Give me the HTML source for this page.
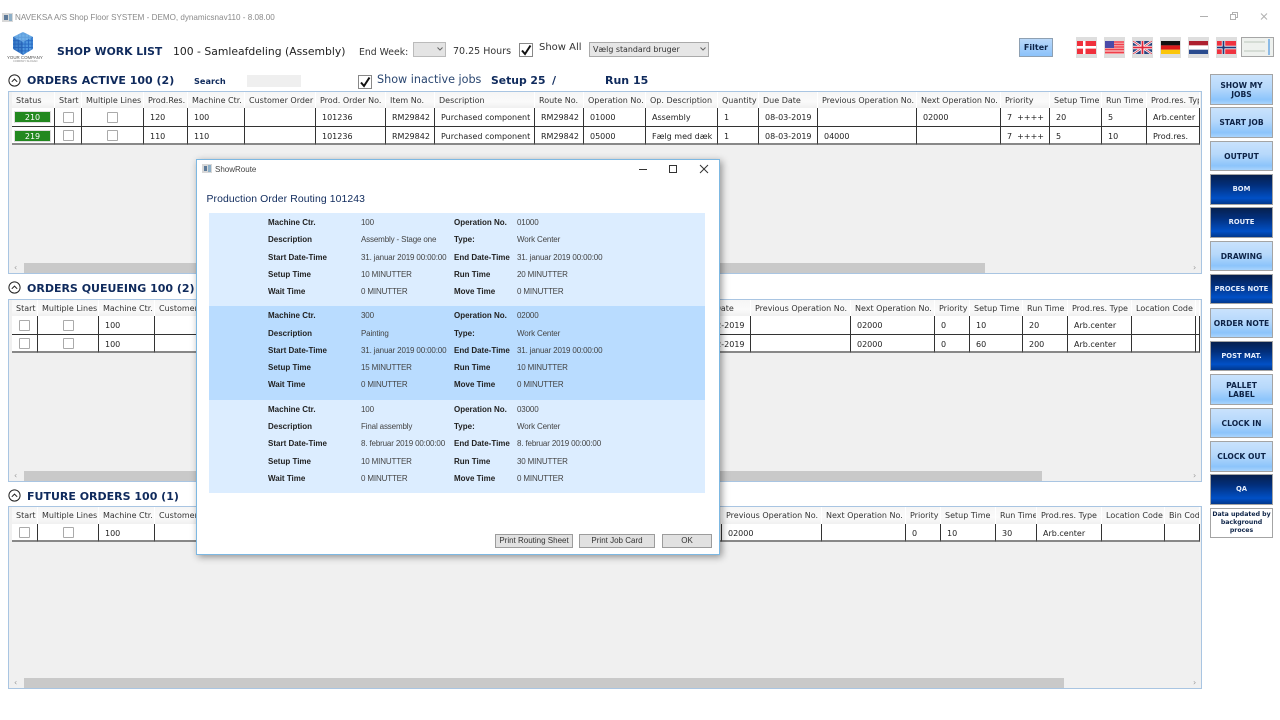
<!DOCTYPE html>
<html><head><meta charset="utf-8"><title>Shop Floor</title>
<style>
html,body{margin:0;padding:0;background:#fff}
body{width:1280px;height:720px;position:relative;overflow:hidden;font-family:"DejaVu Sans","Liberation Sans",sans-serif;color:#222}
#w{position:absolute;left:0;top:0;width:1280px;height:720px;overflow:hidden;filter:blur(.3px)}
.a{position:absolute;white-space:nowrap}
.h{font-weight:bold;color:#0f2a5c;font-size:11px;line-height:14px}
.panel{position:absolute;left:8px;width:1192px;background:#f0f0f0;border:1px solid #a9c5e2;box-sizing:content-box}
.sb{position:absolute;left:0;right:0;bottom:0;height:10px;background:#f0f0f0}
.sb i{position:absolute;left:15px;top:0;height:10px;background:#c9c9c9}
.sb b{position:absolute;top:0;font:normal 8px/10px "DejaVu Sans",sans-serif;color:#999}
table{position:absolute;border-collapse:separate;border-spacing:0;table-layout:fixed;font-size:8px;color:#222}
th{font-weight:normal;height:16px;padding:0 0 0 4px;text-align:left;white-space:nowrap;overflow:hidden;background:linear-gradient(#f6f6f6,#fafafa 60%,#f0f0f0);border-right:1px solid #fff;box-sizing:border-box;color:#333}
td{height:19px;padding:0 0 0 6px;background:#fff;border-right:1px solid #333;border-bottom:1px solid #333;white-space:nowrap;overflow:hidden;box-sizing:border-box}
tr.l td{height:18px;padding-top:2px;border-bottom:2px solid #888}
td.c{text-align:center;padding:0}
tr.l td.c{padding:1px 0 0}
.cb{display:inline-block;width:9px;height:9px;border:1px solid #aaa;background:#fff;vertical-align:middle;border-radius:1px}
.st{display:block;width:35px;height:10px;margin:0 0 0 3px;background:#22881f;color:#fff;line-height:11px;text-align:center;outline:1px solid #ddd}
.dlg{position:absolute;left:196px;top:159px;width:522px;height:394px;background:#fff;border:1px solid #7db8e2;box-shadow:2px 2px 7px rgba(0,0,0,.4)}
.band{position:absolute;left:12px;width:496px}
.d{position:absolute;white-space:nowrap;font:8px/12px "Liberation Sans",sans-serif;color:#444;letter-spacing:-.15px}
.band~.d{margin-top:1px}
.d.b{font-weight:bold;color:#222;letter-spacing:0}
.pb{position:absolute;top:374px;height:14px;background:#e1e1e1;border:1px solid #9c9c9c;box-sizing:border-box;text-align:center;font:8px/12px "Liberation Sans",sans-serif;color:#333}
.btn{position:absolute;left:1210px;width:63px;box-sizing:border-box;border:1px solid #a4a4a4;display:flex;align-items:center;justify-content:center;text-align:center;font-weight:bold;font-size:7.6px;line-height:9px;color:#0d2347;background:linear-gradient(#c9e2fc,#b6d8fb 45%,#8cc4fb 85%,#a9d4fc)}
.btn.k{color:#e6eefc;font-size:6.8px;background:linear-gradient(#06204e,#022f7c 35%,#0150c6 80%,#01378c)}
.flag{position:absolute;top:37px;width:21px;height:21px;background:#dedede}
.flag svg{position:absolute;left:1px;top:4px;width:19px;height:13px}
.chk{position:absolute;width:12px;height:12px;background:#fff;border:1px solid #888}
</style></head><body><div id="w">

<svg class="a" style="left:2px;top:13px" width="11" height="9"><rect width="11" height="9" fill="#d8d8d8"/><rect x="2" y="2" width="4" height="5" fill="#5d7a99"/><rect x="7" y="1" width="3" height="7" fill="#8fb0c8"/></svg>
<div class="a" style="left:15px;top:12px;font:8.1px/12px 'Liberation Sans',sans-serif;color:#8a8a8a">NAVEKSA A/S Shop Floor SYSTEM - DEMO, dynamicsnav110 - 8.08.00</div>
<svg class="a" style="left:1198px;top:10px" width="76" height="12" fill="none" stroke="#b0b0b0"><path d="M2 6.5h8"/><path d="M32.5 4.5h5v5h-5zM34.5 4.5v-2h5v5h-2"/><path d="M63 3.5l6 6M69 3.5l-6 6"/></svg>

<svg class="a" style="left:12px;top:31px" width="22" height="25" viewBox="0 0 22 25">
<defs><pattern id="g" width="3.4" height="3.4" patternUnits="userSpaceOnUse"><rect width="3.4" height="3.4" fill="#2a6cc4"/><rect width="2.4" height="2.4" fill="#4f98e0"/></pattern></defs>
<path d="M11 1L21 6V18L11 24L1 18V6Z" fill="url(#g)"/><path d="M11 1L21 6L11 11L1 6Z" fill="#8cc6f0" opacity=".55"/><path d="M11 11V24L1 18V6Z" fill="#1d4f9e" opacity=".3"/></svg>
<div class="a" style="left:7px;top:55px;font:4.4px/5px 'Liberation Sans',sans-serif;color:#555">YOUR COMPANY</div>
<div class="a" style="left:13px;top:60px;font:2.6px/3px 'Liberation Sans',sans-serif;color:#888">COMPANY SLOGAN</div>

<div class="a h" style="left:57px;top:45px;font-size:10.8px">SHOP WORK LIST</div>
<div class="a" style="left:173px;top:45px;font-size:10.8px;line-height:14px;color:#222">100 - Samleafdeling (Assembly)</div>
<div class="a" style="left:359px;top:46px;font-size:9.3px;line-height:13px;color:#333">End Week:</div>
<div class="a" style="left:413px;top:42px;width:33px;height:15px;background:#e4e4e4;border:1px solid #bbb;box-sizing:border-box"></div>
<svg class="a" style="left:437px;top:47px" width="6" height="4" fill="none" stroke="#666"><path d="M.5 .5L3 3l2.5-2.5"/></svg>
<div class="a" style="left:453px;top:45px;font-size:9.5px;line-height:13px;color:#333">70.25 Hours</div>
<div class="chk" style="left:519px;top:43px"><svg width="12" height="12" style="display:block"><path d="M2 6.5l3 3.5L10.5 1.5" fill="none" stroke="#111" stroke-width="2"/></svg></div>
<div class="a" style="left:539px;top:41px;font-size:10px;line-height:14px;color:#333">Show All</div>
<div class="a" style="left:589px;top:42px;width:120px;height:15px;background:#e6e6e6;border:1px solid #aaa;box-sizing:border-box;font-size:7.9px;line-height:14px;padding-left:3px;color:#333">Vælg standard bruger</div>
<svg class="a" style="left:700px;top:47px" width="6" height="4" fill="none" stroke="#666"><path d="M.5 .5L3 3l2.5-2.5"/></svg>

<div class="a" style="left:1019px;top:38px;width:34px;height:19px;box-sizing:border-box;border:1px solid #8ea0b2;background:linear-gradient(#b9d8fa,#8cc2fa);font-weight:bold;font-size:8px;line-height:17px;text-align:center;color:#0d2347">Filter</div>

<div class="flag" style="left:1076px"><svg viewBox="0 0 19 13"><rect width="19" height="13" fill="#f0303c"/><path d="M6 0h2.5v13H6zM0 5h19v2.6H0z" fill="#fff"/></svg></div>
<div class="flag" style="left:1104px"><svg viewBox="0 0 19 13"><rect width="19" height="13" fill="#f6a5a8"/><path d="M0 1h19M0 3.5h19M0 6h19M0 8.5h19M0 11.5h19" stroke="#ef3f4b" stroke-width="1.2"/><rect width="9" height="7" fill="#4a4aa8"/></svg></div>
<div class="flag" style="left:1132px"><svg viewBox="0 0 19 13"><rect width="19" height="13" fill="#27457f"/><path d="M0 0L19 13M19 0L0 13" stroke="#fff" stroke-width="2.4"/><path d="M0 0L19 13M19 0L0 13" stroke="#d9344a" stroke-width=".8"/><path d="M9.5 0v13M0 6.5h19" stroke="#fff" stroke-width="3.4"/><path d="M9.5 0v13M0 6.5h19" stroke="#e0283c" stroke-width="1.8"/></svg></div>
<div class="flag" style="left:1160px"><svg viewBox="0 0 19 13"><rect width="19" height="4.4" fill="#111"/><rect y="4.4" width="19" height="4.3" fill="#dc1a1a"/><rect y="8.7" width="19" height="4.3" fill="#fbc60a"/></svg></div>
<div class="flag" style="left:1188px"><svg viewBox="0 0 19 13"><rect width="19" height="4.4" fill="#ad1f2f"/><rect y="4.4" width="19" height="4.3" fill="#fff"/><rect y="8.7" width="19" height="4.3" fill="#2a4b8e"/></svg></div>
<div class="flag" style="left:1216px"><svg viewBox="0 0 19 13"><rect width="19" height="13" fill="#ef3340"/><path d="M6.5 0v13M0 6.5h19" stroke="#fff" stroke-width="3.4"/><path d="M6.5 0v13M0 6.5h19" stroke="#1f3a78" stroke-width="1.8"/></svg></div>
<div class="a" style="left:1241px;top:37px;width:33px;height:20px;box-sizing:border-box;border:1px solid #a5a5a5;background:#eef1ee"><div class="a" style="left:26px;top:1px;width:2px;height:16px;background:#8cbbe6"></div><div class="a" style="left:2px;top:3px;width:21px;height:2px;background:#d5dcd5"></div><div class="a" style="left:2px;top:12px;width:21px;height:2px;background:#d5dcd5"></div></div>

<!-- section 1 -->
<svg class="a" style="left:8px;top:74px" width="13" height="13" fill="none" stroke="#222"><circle cx="6.5" cy="6.5" r="5.6"/><path d="M3.8 7.8l2.7-2.7 2.7 2.7"/></svg>
<div class="a h" style="left:27px;top:74px">ORDERS ACTIVE 100 (2)</div>
<div class="a h" style="left:194px;top:75px;font-size:8.2px;line-height:12px">Search</div>
<div class="a" style="left:247px;top:75px;width:54px;height:12px;background:#efefef"></div>
<div class="chk" style="left:358px;top:75px"><svg width="12" height="12" style="display:block"><path d="M2 6.5l3 3.5L10.5 1.5" fill="none" stroke="#111" stroke-width="2"/></svg></div>
<div class="a" style="left:377px;top:73px;font-size:11.2px;line-height:14px;color:#2a4670">Show inactive jobs</div>
<div class="a h" style="left:491px;top:74px;font-size:10.8px">Setup 25</div>
<div class="a h" style="left:552px;top:74px">/</div>
<div class="a h" style="left:605px;top:74px">Run 15</div>

<div class="panel" style="top:91px;height:181px"><div class="sb"><i style="width:961px"></i><b style="left:5px">‹</b><b style="left:1184px">›</b></div></div>
<table style="left:12px;top:92px;width:1188px">
<colgroup><col style="width:43px"><col style="width:27px"><col style="width:62px"><col style="width:44px"><col style="width:57px"><col style="width:71px"><col style="width:70px"><col style="width:49px"><col style="width:100px"><col style="width:49px"><col style="width:62px"><col style="width:72px"><col style="width:41px"><col style="width:59px"><col style="width:99px"><col style="width:84px"><col style="width:49px"><col style="width:52px"><col style="width:45px"><col style="width:53px"></colgroup>
<tr><th>Status</th><th>Start</th><th>Multiple Lines</th><th>Prod.Res.</th><th>Machine Ctr.</th><th>Customer Order</th><th>Prod. Order No.</th><th>Item No.</th><th>Description</th><th>Route No.</th><th>Operation No.</th><th>Op. Description</th><th>Quantity</th><th>Due Date</th><th>Previous Operation No.</th><th>Next Operation No.</th><th>Priority</th><th>Setup Time</th><th>Run Time</th><th>Prod.res. Type</th></tr>
<tr><td style="padding:0"><span class="st">210</span></td><td class="c"><span class="cb"></span></td><td class="c"><span class="cb"></span></td><td>120</td><td>100</td><td></td><td>101236</td><td>RM29842</td><td>Purchased component</td><td>RM29842</td><td>01000</td><td>Assembly</td><td>1</td><td>08-03-2019</td><td></td><td>02000</td><td>7 &nbsp;++++</td><td>20</td><td>5</td><td>Arb.center</td></tr>
<tr class="l"><td style="padding:2px 0 0"><span class="st">219</span></td><td class="c"><span class="cb"></span></td><td class="c"><span class="cb"></span></td><td>110</td><td>110</td><td></td><td>101236</td><td>RM29842</td><td>Purchased component</td><td>RM29842</td><td>05000</td><td>Fælg med dæk</td><td>1</td><td>08-03-2019</td><td>04000</td><td></td><td>7 &nbsp;++++</td><td>5</td><td>10</td><td>Prod.res.</td></tr>
</table>

<!-- section 2 -->
<svg class="a" style="left:8px;top:281px" width="13" height="13" fill="none" stroke="#222"><circle cx="6.5" cy="6.5" r="5.6"/><path d="M3.8 7.8l2.7-2.7 2.7 2.7"/></svg>
<div class="a h" style="left:27px;top:282px">ORDERS QUEUEING 100 (2)</div>
<div class="panel" style="top:299px;height:181px"><div class="sb"><i style="width:1018px"></i><b style="left:5px">‹</b><b style="left:1184px">›</b></div></div>
<table style="left:12px;top:300px;width:1188px">
<colgroup><col style="width:26px"><col style="width:61px"><col style="width:56px"><col style="width:537px"><col style="width:59px"><col style="width:100px"><col style="width:84px"><col style="width:35px"><col style="width:53px"><col style="width:45px"><col style="width:64px"><col style="width:64px"><col style="width:4px"></colgroup>
<tr><th>Start</th><th>Multiple Lines</th><th>Machine Ctr.</th><th>Customer Order</th><th>Due Date</th><th>Previous Operation No.</th><th>Next Operation No.</th><th>Priority</th><th>Setup Time</th><th>Run Time</th><th>Prod.res. Type</th><th>Location Code</th><th></th></tr>
<tr><td class="c"><span class="cb"></span></td><td class="c"><span class="cb"></span></td><td>100</td><td></td><td>08-02-2019</td><td></td><td>02000</td><td>0</td><td>10</td><td>20</td><td>Arb.center</td><td></td><td></td></tr>
<tr class="l"><td class="c"><span class="cb"></span></td><td class="c"><span class="cb"></span></td><td>100</td><td></td><td>08-02-2019</td><td></td><td>02000</td><td>0</td><td>60</td><td>200</td><td>Arb.center</td><td></td><td></td></tr>
</table>

<!-- section 3 -->
<svg class="a" style="left:8px;top:489px" width="13" height="13" fill="none" stroke="#222"><circle cx="6.5" cy="6.5" r="5.6"/><path d="M3.8 7.8l2.7-2.7 2.7 2.7"/></svg>
<div class="a h" style="left:27px;top:490px">FUTURE ORDERS 100 (1)</div>
<div class="panel" style="top:506px;height:181px"><div class="sb"><i style="width:1040px"></i><b style="left:5px">‹</b><b style="left:1184px">›</b></div></div>
<table style="left:12px;top:507px;width:1188px">
<colgroup><col style="width:26px"><col style="width:61px"><col style="width:56px"><col style="width:567px"><col style="width:100px"><col style="width:84px"><col style="width:35px"><col style="width:55px"><col style="width:41px"><col style="width:65px"><col style="width:63px"><col style="width:35px"></colgroup>
<tr><th style="height:17px">Start</th><th>Multiple Lines</th><th>Machine Ctr.</th><th>Customer Order</th><th>Previous Operation No.</th><th>Next Operation No.</th><th>Priority</th><th>Setup Time</th><th>Run Time</th><th>Prod.res. Type</th><th>Location Code</th><th>Bin Code</th></tr>
<tr class="l"><td class="c"><span class="cb"></span></td><td class="c"><span class="cb"></span></td><td>100</td><td></td><td>02000</td><td></td><td>0</td><td>10</td><td>30</td><td>Arb.center</td><td></td><td></td></tr>
</table>

<!-- right buttons -->
<div class="btn" style="top:74px;height:31px">SHOW MY<br>JOBS</div>
<div class="btn" style="top:107px;height:31px">START JOB</div>
<div class="btn" style="top:141px;height:30px">OUTPUT</div>
<div class="btn k" style="top:174px;height:31px">BOM</div>
<div class="btn k" style="top:207px;height:31px">ROUTE</div>
<div class="btn" style="top:241px;height:30px">DRAWING</div>
<div class="btn k" style="top:274px;height:30px">PROCES NOTE</div>
<div class="btn" style="top:308px;height:30px">ORDER NOTE</div>
<div class="btn k" style="top:341px;height:30px">POST MAT.</div>
<div class="btn" style="top:374px;height:31px">PALLET<br>LABEL</div>
<div class="btn" style="top:408px;height:30px">CLOCK IN</div>
<div class="btn" style="top:441px;height:31px">CLOCK OUT</div>
<div class="btn k" style="top:474px;height:31px">QA</div>
<div class="btn" style="top:508px;height:30px;background:#fff;font-size:6.2px;line-height:8px">Data updated by background proces</div>

<!-- dialog -->
<div class="dlg">
<svg class="a" style="left:5px;top:4px" width="10" height="9"><rect width="10" height="9" fill="#d8d8d8"/><rect x="2" y="2" width="3" height="5" fill="#5d7a99"/><rect x="6" y="1" width="3" height="7" fill="#8fb0c8"/></svg>
<div class="d" style="left:18px;top:4px;color:#444;letter-spacing:0">ShowRoute</div>
<svg class="a" style="left:439px;top:2px" width="75" height="14" fill="none" stroke="#333"><path d="M3 7.5h8"/><path d="M33.5 3.5h7v7h-7z"/><path d="M64 3l8 8M72 3l-8 8"/></svg>
<div class="d" style="left:9.5px;top:33px;font-size:10.4px;line-height:14px;color:#0f2a5c;letter-spacing:.1px">Production Order Routing 101243</div>

<div class="band" style="top:53px;height:93px;background:#dcedff"></div>
<div class="band" style="top:146px;height:94px;background:#b9dcff"></div>
<div class="band" style="top:240px;height:93px;background:#dcedff"></div>

<div class="d b" style="left:71px;top:56px">Machine Ctr.</div><div class="d" style="left:164px;top:56px">100</div><div class="d b" style="left:257px;top:56px">Operation No.</div><div class="d" style="left:320px;top:56px">01000</div>
<div class="d b" style="left:71px;top:73px">Description</div><div class="d" style="left:164px;top:73px">Assembly - Stage one</div><div class="d b" style="left:257px;top:73px">Type:</div><div class="d" style="left:320px;top:73px">Work Center</div>
<div class="d b" style="left:71px;top:91px">Start Date-Time</div><div class="d" style="left:164px;top:91px">31. januar 2019 00:00:00</div><div class="d b" style="left:257px;top:91px">End Date-Time</div><div class="d" style="left:320px;top:91px">31. januar 2019 00:00:00</div>
<div class="d b" style="left:71px;top:108px">Setup Time</div><div class="d" style="left:164px;top:108px">10 MINUTTER</div><div class="d b" style="left:257px;top:108px">Run Time</div><div class="d" style="left:320px;top:108px">20 MINUTTER</div>
<div class="d b" style="left:71px;top:125px">Wait Time</div><div class="d" style="left:164px;top:125px">0 MINUTTER</div><div class="d b" style="left:257px;top:125px">Move Time</div><div class="d" style="left:320px;top:125px">0 MINUTTER</div>

<div class="d b" style="left:71px;top:149px">Machine Ctr.</div><div class="d" style="left:164px;top:149px">300</div><div class="d b" style="left:257px;top:149px">Operation No.</div><div class="d" style="left:320px;top:149px">02000</div>
<div class="d b" style="left:71px;top:167px">Description</div><div class="d" style="left:164px;top:167px">Painting</div><div class="d b" style="left:257px;top:167px">Type:</div><div class="d" style="left:320px;top:167px">Work Center</div>
<div class="d b" style="left:71px;top:184px">Start Date-Time</div><div class="d" style="left:164px;top:184px">31. januar 2019 00:00:00</div><div class="d b" style="left:257px;top:184px">End Date-Time</div><div class="d" style="left:320px;top:184px">31. januar 2019 00:00:00</div>
<div class="d b" style="left:71px;top:201px">Setup Time</div><div class="d" style="left:164px;top:201px">15 MINUTTER</div><div class="d b" style="left:257px;top:201px">Run Time</div><div class="d" style="left:320px;top:201px">10 MINUTTER</div>
<div class="d b" style="left:71px;top:218px">Wait Time</div><div class="d" style="left:164px;top:218px">0 MINUTTER</div><div class="d b" style="left:257px;top:218px">Move Time</div><div class="d" style="left:320px;top:218px">0 MINUTTER</div>

<div class="d b" style="left:71px;top:243px">Machine Ctr.</div><div class="d" style="left:164px;top:243px">100</div><div class="d b" style="left:257px;top:243px">Operation No.</div><div class="d" style="left:320px;top:243px">03000</div>
<div class="d b" style="left:71px;top:260px">Description</div><div class="d" style="left:164px;top:260px">Final assembly</div><div class="d b" style="left:257px;top:260px">Type:</div><div class="d" style="left:320px;top:260px">Work Center</div>
<div class="d b" style="left:71px;top:277px">Start Date-Time</div><div class="d" style="left:164px;top:277px">8. februar 2019 00:00:00</div><div class="d b" style="left:257px;top:277px">End Date-Time</div><div class="d" style="left:320px;top:277px">8. februar 2019 00:00:00</div>
<div class="d b" style="left:71px;top:295px">Setup Time</div><div class="d" style="left:164px;top:295px">10 MINUTTER</div><div class="d b" style="left:257px;top:295px">Run Time</div><div class="d" style="left:320px;top:295px">30 MINUTTER</div>
<div class="d b" style="left:71px;top:312px">Wait Time</div><div class="d" style="left:164px;top:312px">0 MINUTTER</div><div class="d b" style="left:257px;top:312px">Move Time</div><div class="d" style="left:320px;top:312px">0 MINUTTER</div>

<div class="pb" style="left:298px;width:78px">Print Routing Sheet</div>
<div class="pb" style="left:382px;width:76px">Print Job Card</div>
<div class="pb" style="left:465px;width:50px">OK</div>
</div>
</div></body></html>
